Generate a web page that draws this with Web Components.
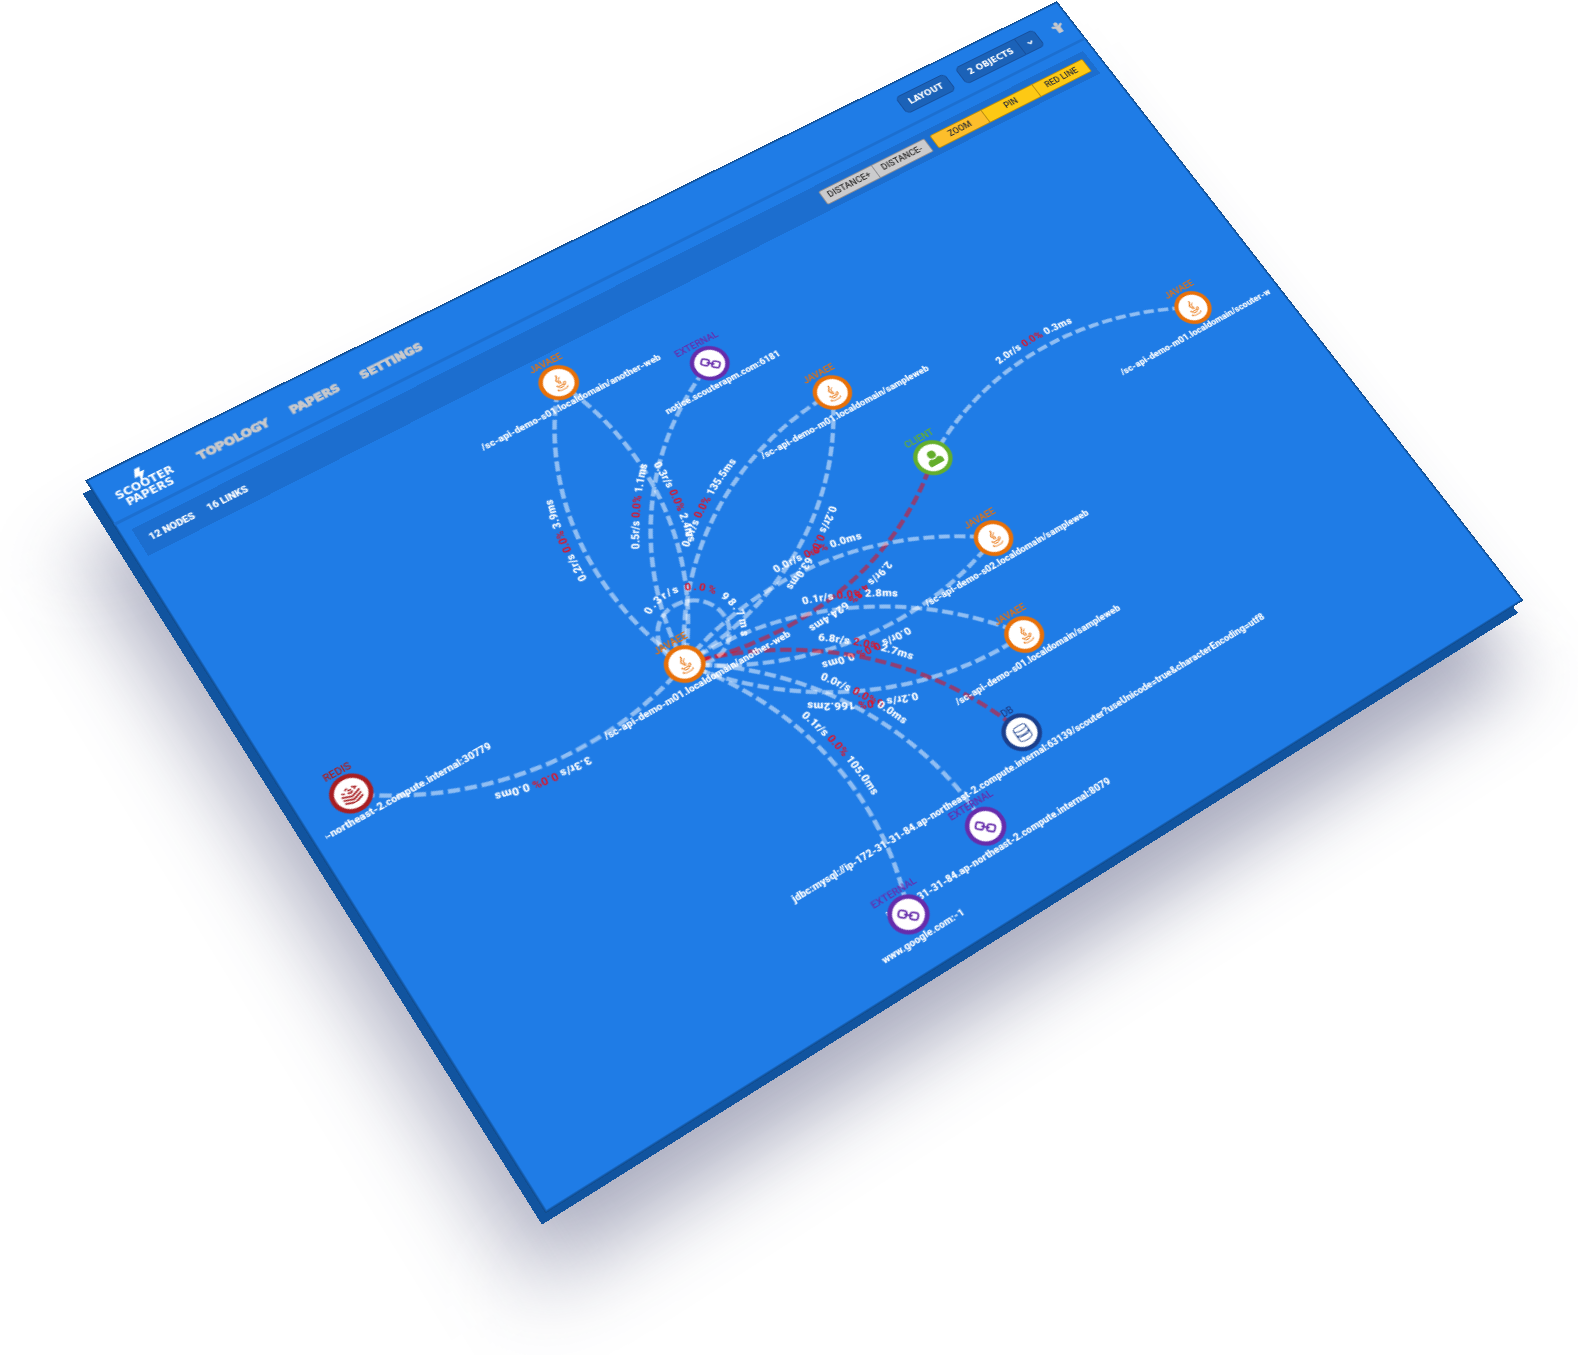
<!DOCTYPE html>
<html lang="en">
<head>
<meta charset="utf-8">
<title>Scooter Papers</title>
<style>
html,body{margin:0;background:#fff}
body{font-family:Roboto,"Liberation Sans",sans-serif;overflow:hidden}
</style>
</head>
<body>
<tilted-scene>
  <app-header>
    <nav-item>TOPOLOGY</nav-item>
    <nav-item>PAPERS</nav-item>
    <nav-item>SETTINGS</nav-item>
  </app-header>
  <status-bar>
    <span slot="info">12 NODES</span>
    <span slot="info">16 LINKS</span>
    <button-group slot="tools" labels="DISTANCE+,DISTANCE-"></button-group>
    <button-group slot="tools" tone="yellow" labels="ZOOM,PIN,RED LINE"></button-group>
  </status-bar>
  <topology-map></topology-map>
</tilted-scene>

<script>
const define = (name, html, setup) => {
  const tpl = document.createElement('template');
  tpl.innerHTML = html;
  customElements.define(name, class extends HTMLElement {
    constructor() {
      super();
      this.attachShadow({mode: 'open'}).append(tpl.content.cloneNode(true));
    }
    connectedCallback() { if (setup) setup(this, this.shadowRoot); }
  });
};

/* The sheet lies on a plane seen in perspective; --plane projects it on the screen. */
define('tilted-scene', `
<style>
:host{display:block;position:relative;min-height:100vh;overflow:hidden;
  --plane:matrix3d(1.097578,-0.466865,0,0.0001422461, 0.54431,0.832565,0,-0.0000984245, 0,0,1,0, 86.7,480.7,0,1)}
.sheet,.side,.shadow{width:1024px;height:768px;transform-origin:0 0;position:absolute;left:0;top:0;box-sizing:border-box}
.shadow{transform:translate(-4px,72px) var(--plane);background:rgba(32,38,88,.38);filter:blur(36px)}
.side{transform:translate(-4px,13px) var(--plane);background:linear-gradient(#11549f,#11549f)}
.sheet{transform:var(--plane);background:#1f7ce6;display:flex;flex-direction:column;
  box-shadow:0 0 0 1px #114d90, inset 0 0 0 1px #1560b5}
</style>
<div class="shadow"></div><div class="side"></div>
<main class="sheet"><slot></slot></main>`);

define('app-header', `
<style>
:host{display:block}
header{height:51px;box-sizing:border-box;display:flex;align-items:center;padding:0 10px 0 14px;
  box-shadow:inset 0 -3px #1c6fd0}
nav{display:flex;gap:21px;margin-left:24px;flex:1}
.actions{display:flex;gap:12px;align-items:center}
svg.person{width:12px;height:13px;margin-left:5px;display:block}
</style>
<header>
  <brand-logo></brand-logo>
  <nav><slot></slot></nav>
  <div class="actions">
    <push-button>LAYOUT</push-button>
    <push-button split>2 OBJECTS</push-button>
    <svg class="person" viewBox="0 0 22 24" fill="#c9c9cb"><circle cx="11" cy="4" r="4"/><path d="M1 5 8 8h6l7-3 1 4-6 4v11H6V13L0 9z"/></svg>
  </div>
</header>`);

define('brand-logo', `
<style>
:host{display:block}
a{display:flex;flex-direction:column;align-items:center;color:#fff;text-decoration:none;
  font:700 10px/10px "DejaVu Sans",sans-serif;width:52px}
svg{width:12px;height:16px;display:block;margin-bottom:-4px}
</style>
<a href="#"><svg viewBox="0 0 24 30" fill="#fff"><path d="M9 0h10l-4 9h8L8 30l3-14H2z"/></svg><span>SCOOTER</span><span>PAPERS</span></a>`);

define('nav-item', `
<style>
:host{display:block}
a{color:#c9c9cb;text-decoration:none;font:700 11px/16px "DejaVu Sans",sans-serif;-webkit-text-stroke:1px #c9c9cb}
</style><a href="#"><slot></slot></a>`);

define('push-button', `
<style>
:host{display:flex}
button{height:22px;box-sizing:border-box;border:1px solid #164f9c;background:#1b62b8;color:#fff;
  font:700 9px/12px "DejaVu Sans",sans-serif;padding:0 8px;border-radius:5px}
.more{display:none;width:22px;padding:0}
:host([split]) .main{border-radius:5px 0 0 5px}
:host([split]) .more{display:block;border-radius:0 5px 5px 0;border-left:0}
svg{width:6px;height:4px}
</style>
<button class="main"><slot></slot></button><button class="more" aria-label="More"><svg viewBox="0 0 12 8" fill="none" stroke="#fff" stroke-width="3"><path d="m1 1 5 5 5-5"/></svg></button>`);

define('status-bar', `
<style>
:host{display:flex;margin:10px 10px 0;height:30px;align-items:center;background:#1c6ecf;
  padding:0 6px 0 9px;color:#fff;font:900 9px/12px Roboto,sans-serif}
.info{display:flex;gap:12px;flex:1}
.tools{display:flex;gap:6px}
</style>
<div class="info"><slot name="info"></slot></div><div class="tools"><slot name="tools"></slot></div>`);

define('button-group', `
<style>
:host{display:flex;--face:#cbcbcd;--edge:#8f8f94;--first:#cbcbcd}
:host([tone=yellow]){--face:#fdc914;--edge:#b98d10;--first:#fdbe2b}
button{width:60px;height:17px;box-sizing:border-box;padding:0;background:var(--face);color:#333;
  border:1px solid var(--edge);border-left-width:0;font:500 9px/12px Roboto,sans-serif}
button:first-child{border-left-width:1px;border-radius:2px 0 0 2px;background:var(--first)}
button:last-child{border-radius:0 2px 2px 0}
.row{display:flex}
</style><div class="row"></div>`, (el, root) => {
  for (const label of el.getAttribute('labels').split(',')) {
    const b = document.createElement('button');
    b.textContent = label;
    root.querySelector('.row').append(b);
  }
});

const ICONS = {
  java: `<svg viewBox="0 0 32 32" fill="none" stroke="currentColor" stroke-linecap="round"><path stroke-width="2" d="M17 1c3 5-8 7-3 12 1 1 2 2 1 4"/><path stroke-width="1.500" d="M21 7c-4 2-6 4-3 7 1 1 0 3-1 4M10 19c-4 2 0 2.500 6 2.500 3 0 5 0 6-1M11 23.500c-1 2.500 8 2.500 10 0M22 18.500c5-2 4 3 0 5M8 26.500c-5 2 2 4 8 4 6 0 10-1 9-3"/></svg>`,
  link: `<svg viewBox="0 0 32 32" fill="none" stroke="currentColor" stroke-width="3"><g transform="rotate(43 16 16)"><rect x="0" y="10" width="13" height="12" rx="4"/><rect x="19" y="10" width="13" height="12" rx="4"/><path d="M9 16h14"/></g></svg>`,
  user: `<svg viewBox="0 0 32 32" fill="currentColor"><circle cx="16" cy="9" r="7.500"/><path d="M2 28v-4c0-5 4-7 8-7 4 2.500 8 2.500 12 0 4 0 8 2 8 7v4q-1 2-3 2H5q-2 0-3-2z"/></svg>`,
  redis: `<svg viewBox="0 0 32 32" fill="none" stroke="currentColor"><path stroke-width="3" d="M0 14l16 6 16-6M0 20l16 6 16-6M0 26l16 6 16-6"/><path stroke-width="2.500" d="M3 8.500l5 2.500M12 12l5 2 4-2M10 6l5-2M14 8l6 1M22 5l6 3-4 2"/></svg>`,
  db: `<svg viewBox="0 0 32 32" fill="none" stroke="currentColor" stroke-width="1.500"><ellipse cx="16" cy="7" rx="12" ry="5"/><path d="M4 7v19c0 6.500 24 6.500 24 0V7M4 15c0 6 24 6 24 0M4 17.500c0 6 24 6 24 0"/></svg>`
};

define('topo-node', `
<style>
:host{position:absolute;display:flex;flex-direction:column;align-items:center;transform:translate(-50%,-50%);white-space:nowrap}
.kind{font:500 9px/10px Roboto,sans-serif;color:var(--tone)}
.name{font:900 9px/10px Roboto,sans-serif;color:#fff}
.ring{width:36px;height:36px;box-sizing:border-box;border:4px solid var(--tone);border-radius:50%;background:#fff;
  display:flex;align-items:center;justify-content:center;color:var(--tone)}
svg{display:block;width:17px;height:17px}
</style>
<span class="kind"></span><div class="ring"></div><span class="name"><slot></slot></span>`, (el, root) => {
  root.querySelector('.kind').textContent = el.getAttribute('kind');
  root.querySelector('.ring').innerHTML = ICONS[el.getAttribute('icon')];
});

/* x, y: node centre in sheet pixels */
const NODES = [
  {id:'redis',x:46,y:373,kind:'REDIS',icon:'redis',tone:'#a81e22',name:'ip-172-31-31-84.ap-northeast-2.compute.internal:30779'},
  {id:'s01a',x:392,y:122,kind:'JAVAEE',icon:'java',tone:'#e87008',name:'/sc-api-demo-s01.localdomain/another-web'},
  {id:'notice',x:518,y:174,kind:'EXTERNAL',icon:'link',tone:'#662cab',name:'notice.scouterapm.com:6181'},
  {id:'m01s',x:597,y:257,kind:'JAVAEE',icon:'java',tone:'#e87008',name:'/sc-api-demo-m01.localdomain/sampleweb'},
  {id:'client',x:639,y:361,kind:'CLIENT',icon:'user',tone:'#64ae2b',name:''},
  {id:'s02s',x:641,y:458,kind:'JAVAEE',icon:'java',tone:'#e87008',name:'/sc-api-demo-s02.localdomain/sampleweb'},
  {id:'s01s',x:611,y:552,kind:'JAVAEE',icon:'java',tone:'#e87008',name:'/sc-api-demo-s01.localdomain/sampleweb'},
  {id:'db',x:556,y:629,kind:'DB',icon:'db',tone:'#1b3f8c',name:'jdbc:mysql://ip-172-31-31-84.ap-northeast-2.compute.internal:63139/scouter?useUnicode=true&characterEncoding=utf8'},
  {id:'ext',x:480,y:685,kind:'EXTERNAL',icon:'link',tone:'#662cab',name:'ip-172-31-31-84.ap-northeast-2.compute.internal:8079'},
  {id:'google',x:380,y:716,kind:'EXTERNAL',icon:'link',tone:'#662cab',name:'www.google.com:-1'},
  {id:'hub',x:342,y:418,kind:'JAVAEE',icon:'java',tone:'#e87008',name:'/sc-api-demo-m01.localdomain/another-web'},
  {id:'web',x:939,y:355,kind:'JAVAEE',icon:'java',tone:'#e87008',name:'/sc-api-demo-m01.localdomain/scouter-webapp'}
];
const LINKS = [
  ['hub','redis','3.3r/s','0.0%','0.0ms'],
  ['hub','s01a','0.2r/s','0.0%','3.9ms'],
  ['s01a','hub','0.3r/s','0.0%','2.4ms'],
  ['hub','notice','0.5r/s','0.0%','1.1ms'],
  ['hub','m01s','0.1r/s','0.0%','135.5ms'],
  ['m01s','hub','0.2r/s','0.0%','63.0ms'],
  ['client','web','2.0r/s','0.0%','0.3ms'],
  ['client','hub','2.9r/s','4.8%','624.4ms',1],
  ['hub','s02s','0.0r/s','0.0%','0.0ms'],
  ['s02s','hub','0.0r/s','0.0%','0.0ms'],
  ['hub','s01s','0.1r/s','0.0%','2.8ms'],
  ['s01s','hub','0.2r/s','0.0%','166.2ms'],
  ['hub','db','6.8r/s','2.0%','2.7ms',1],
  ['hub','ext','0.0r/s','0.0%','0.0ms'],
  ['hub','google','0.1r/s','0.0%','105.0ms'],
  ['hub','hub','0.3r/s','0.0%','98.7ms']
];
const MAP_X = 10, MAP_Y = 91;

define('topology-map', `
<style>
:host{display:block;position:relative;flex:1;margin:0 10px 10px;overflow:hidden}
svg{position:absolute;left:0;top:0;width:100%;height:100%;overflow:hidden}
path{fill:none;stroke:rgba(255,255,255,.5);stroke-width:4;stroke-dasharray:10 4}
path.hot{stroke:rgba(255,0,0,.5)}
text{font:900 10px Roboto,sans-serif;fill:#fff;text-anchor:middle}
.err{fill:#e31022;font-weight:700}
</style>
<svg></svg>`, (el, root) => {
  const at = id => NODES.find(n => n.id === id);
  root.querySelector('svg').innerHTML = LINKS.map(([from, to, rate, err, time, hot], i) => {
    const a = at(from), b = at(to);
    const ax = a.x - MAP_X, ay = a.y - MAP_Y, bx = b.x - MAP_X, by = b.y - MAP_Y;
    const d = from === to
      ? `M${ax} ${ay}A31 31 0 0 1 ${ax + 45} ${ay - 43}A31 31 0 0 1 ${ax} ${ay}`
      : (r => `M${ax} ${ay}A${r} ${r} 0 0 1 ${bx} ${by}`)(Math.round(Math.hypot(bx - ax, by - ay)));
    return `<path id="l${i}"${hot ? ' class="hot"' : ''} d="${d}"/><text dy="-10"><textPath href="#l${i}" startOffset="50%">${rate} <tspan class="err">${err}</tspan> ${time}</textPath></text>`;
  }).join('');
  for (const n of NODES) {
    const e = document.createElement('topo-node');
    e.setAttribute('kind', n.kind);
    e.setAttribute('icon', n.icon);
    e.style.cssText = `left:${n.x - MAP_X}px;top:${n.y - MAP_Y}px;--tone:${n.tone}`;
    e.textContent = n.name || '\u00a0';
    root.append(e);
  }
});
</script>
</body>
</html>
